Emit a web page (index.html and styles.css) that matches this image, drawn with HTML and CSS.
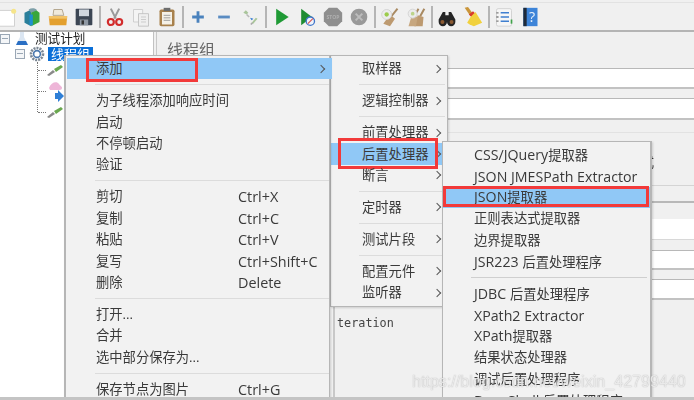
FILE: index.html
```html
<!DOCTYPE html>
<html lang="zh-CN">
<head>
    <meta charset="UTF-8">
    <title>线程组</title>
    <link rel="stylesheet" href="styles.css">
</head>
<body>

<div class="window">
    <div class="toolbar">
        <svg class="tool tool-first" viewBox="0 0 24 24"><rect x="-8" y="4" width="29" height="19" fill="#fff" stroke="#c9c9c9"/><circle cx="20" cy="5" r="3" fill="#f6e58a"/></svg>
        <svg class="tool" viewBox="0 0 24 24"><path d="M3 7 11 3v20l-8-4z" fill="#2b7f9a"/><path d="M11 5l5-2 5 4v11l-10 5z" fill="#3aa63c"/><path d="M8 3c3-2 8-2 10 1l-7 3z" fill="#7d9fa8"/><rect x="9" y="9" width="4" height="13" fill="#1f8fd0"/></svg>
        <svg class="tool" viewBox="0 0 24 24"><path d="M7 3h10l2 7H6z" fill="#efe9dc" stroke="#a99a80"/><path d="M1 11h22l-1 11H2z" fill="#e3a02f"/><path d="M1 11h22v3H1z" fill="#f3c468"/></svg>
        <svg class="tool" viewBox="0 0 24 24"><rect x="2" y="2" width="20" height="20" rx="1" fill="#3c4654"/><rect x="6" y="3" width="12" height="8" fill="#cfd6de"/><rect x="7" y="15" width="10" height="7" fill="#8f98a3"/><rect x="9" y="16" width="3" height="5" fill="#333"/></svg>
        <i class="tool-sep"></i>
        <svg class="tool" viewBox="0 0 24 24"><path d="M7 2l6 12M17 2l-6 12" stroke="#9a9a9a" stroke-width="2.4" fill="none"/><circle cx="7" cy="18" r="3.6" fill="none" stroke="#d22c2c" stroke-width="2.6"/><circle cx="17" cy="18" r="3.6" fill="none" stroke="#d22c2c" stroke-width="2.6"/></svg>
        <svg class="tool" viewBox="0 0 24 24"><path d="M3 3h11v15H3z" fill="#f4f4f4" stroke="#c9c9c9"/><path d="M9 8h12v15H9z" fill="#efefef" stroke="#bdbdbd"/><path d="M12 12h6M12 15h6M12 18h6" stroke="#c4c4c4"/></svg>
        <svg class="tool" viewBox="0 0 24 24"><rect x="3" y="3" width="18" height="20" rx="2" fill="#a8814c"/><rect x="6" y="6" width="12" height="15" fill="#f5f1e7"/><rect x="8" y="1" width="8" height="4" fill="#6d6d6d"/><path d="M8 10h8M8 13h8M8 16h8" stroke="#8f8f8f"/></svg>
        <i class="tool-sep"></i>
        <svg class="tool" viewBox="0 0 24 24"><path d="M12 5v14M5 12h14" stroke="#4a82bd" stroke-width="3.4"/></svg>
        <svg class="tool" viewBox="0 0 24 24"><path d="M5 12h14" stroke="#5a8cc2" stroke-width="3.4"/></svg>
        <svg class="tool" viewBox="0 0 24 24"><path d="M4 7l3-3 3 3-2 2z" fill="#a9c59a"/><path d="M8 9l3 3" stroke="#b9b9b9" stroke-width="2"/><path d="M12 13l4 1-2 2z" fill="#2a74d0"/><path d="M16 20l5-6-2-1-5 6z" fill="#a9c59a"/><path d="M13 21l2-2" stroke="#aaa" stroke-width="2"/></svg>
        <i class="tool-sep"></i>
        <svg class="tool tool-play" viewBox="0 0 24 24"><path d="M5 2l15 10L5 22z" fill="#1f9a35"/></svg>
        <svg class="tool" viewBox="0 0 24 24"><path d="M5 2l13 10L5 22z" fill="#1e8c32"/><circle cx="16" cy="17" r="5" fill="#eef3fb" stroke="#3f74c9" stroke-width="1.6"/><path d="M13 20l6-6" stroke="#d9534f" stroke-width="1.4"/></svg>
        <svg class="tool" viewBox="0 0 24 24"><path d="M7 1h10l6 6v10l-6 6H7l-6-6V7z" fill="#8e8e8e"/><text x="12" y="14.5" class="stop-text">STOP</text></svg>
        <svg class="tool" viewBox="0 0 24 24"><circle cx="12" cy="12" r="10" fill="#999"/><path d="M8 8l8 8M16 8l-8 8" stroke="#bdbdbd" stroke-width="2.4"/></svg>
        <i class="tool-sep"></i>
        <svg class="tool" viewBox="0 0 24 24"><path d="M21 2l-8 10" stroke="#a98a62" stroke-width="2.4"/><path d="M12 9l6 5-6 9-8-3z" fill="#bd9a70"/><circle cx="8" cy="9" r="6" fill="#ececec" stroke="#cfcfcf"/><circle cx="8" cy="9" r="2.6" fill="#9ccc4c"/></svg>
        <svg class="tool" viewBox="0 0 24 24"><path d="M22 2l-5 9M15 2l-5 9" stroke="#a98a62" stroke-width="2.4"/><path d="M14 10l7 2-1 11H10z" fill="#bd9a70"/><path d="M7 10l7 2-2 11H3z" fill="#c7a77f"/><circle cx="8" cy="8" r="5.4" fill="#ececec" stroke="#cfcfcf"/><circle cx="8" cy="8" r="2.2" fill="#bcd48a"/></svg>
        <i class="tool-sep"></i>
        <svg class="tool" viewBox="0 0 24 24"><path d="M7 6h3v4h4V6h3l5 9v3a5 5 0 0 1-10 0v-3h-0a0 0 0 0 0 0 0v3a5 5 0 0 1-10 0v-3z" fill="#252525"/><circle cx="6.500" cy="18" r="2.400" fill="#8b5a32"/><circle cx="17.500" cy="18" r="2.400" fill="#8b5a32"/></svg>
        <svg class="tool" viewBox="0 0 24 24"><path d="M2 1l4-1 6 8-3 3z" fill="#c9953a"/><path d="M7 9l5-4 3 3-4 5z" fill="#d93a2b"/><path d="M9 12l6-6 8 13-10 4-5-2-3-2z" fill="#f1d13d"/></svg>
        <i class="tool-sep"></i>
        <svg class="tool" viewBox="0 0 24 24"><rect x="3" y="2" width="18" height="21" rx="2" fill="#f6f6f6" stroke="#cdcdcd"/><path d="M8 7h10M8 12h10M8 17h10" stroke="#3f7fd0" stroke-width="1.8"/><path d="M3 7h3M3 12h3M3 17h3" stroke="#555" stroke-width="1.6" stroke-dasharray="1.500 1"/><rect x="20" y="15" width="2" height="5" fill="#3fa24a"/></svg>
        <svg class="tool" viewBox="0 0 24 24"><rect x="4" y="1" width="17" height="22" fill="#3d84d8"/><rect x="4" y="1" width="4" height="22" fill="#1f2a38"/><text x="14.500" y="18" class="help-text">?</text></svg>
    </div>

    <div class="workspace">
        <div class="tree">
            <div class="tree-row tree-row-root">
                <i class="expander"></i>
                <svg class="tree-icon" viewBox="0 0 16 16"><path d="M6 1h4v5l4 8H2l4-8z" fill="#dbe6f2"/><path d="M4 10h8l2 4H2z" fill="#2a6fc4"/></svg>
                <span class="tree-label">测试计划</span>
            </div>
            <div class="tree-row tree-row-group">
                <i class="expander"></i>
                <svg class="tree-icon" viewBox="0 0 16 16"><circle cx="8" cy="8" r="6" fill="none" stroke="#7b8794" stroke-width="2.600" stroke-dasharray="2 1"/><circle cx="8" cy="8" r="3.400" fill="#fff" stroke="#4c79ae" stroke-width="1.600"/></svg>
                <span class="tree-label tree-label-selected">线程组</span>
            </div>
            <div class="tree-children">
                <div class="child-row">
                    <i class="stub"></i>
                    <svg class="child-icon" viewBox="0 0 18 12"><path d="M1 11l6-5 2 2-6 4z" fill="#8a8a8a"/><path d="M8 5l7-4 2 2-7 5z" fill="#6aa84f"/></svg>
                </div>
                <div class="child-row child-row-tall">
                    <i class="stub"></i>
                    <svg class="child-icon child-icon-tall" viewBox="0 0 18 22"><path d="M3 8c2-6 8-7 10-4 2 3 3 2 3 4s-2 2-5 2H4z" fill="#eeb6d8"/><path d="M12 10l6 6-6 6v-3H9v-6h3z" fill="#2f7fd6"/></svg>
                </div>
                <div class="child-row">
                    <i class="stub"></i>
                    <svg class="child-icon" viewBox="0 0 18 12"><path d="M1 11l6-5 2 2-6 4z" fill="#8a8a8a"/><path d="M8 5l7-4 2 2-7 5z" fill="#6aa84f"/></svg>
                </div>
            </div>
        </div>

        <div class="content">
            <div class="content-title">线程组</div>
            <div class="field field-name"></div>
            <div class="field field-comment"></div>
            <div class="group">
                <div class="group-note">式</div>
            </div>
            <div class="field field-threads"></div>
            <div class="field field-rampup"></div>
            <div class="field field-loops"></div>
            <div class="iterations">teration</div>
        </div>
    </div>
</div>

<div class="menu menu-main">
    <div class="item item-active mark-add"><span>添加</span><b class="arrow"></b></div>
    <hr class="menu-sep">
    <div class="item"><span>为子线程添加响应时间</span></div>
    <div class="item"><span>启动</span></div>
    <div class="item"><span>不停顿启动</span></div>
    <div class="item"><span>验证</span></div>
    <hr class="menu-sep">
    <div class="item"><span>剪切</span><em>Ctrl+X</em></div>
    <div class="item"><span>复制</span><em>Ctrl+C</em></div>
    <div class="item"><span>粘贴</span><em>Ctrl+V</em></div>
    <div class="item"><span>复写</span><em>Ctrl+Shift+C</em></div>
    <div class="item"><span>删除</span><em>Delete</em></div>
    <hr class="menu-sep">
    <div class="item"><span>打开...</span></div>
    <div class="item"><span>合并</span></div>
    <div class="item"><span>选中部分保存为...</span></div>
    <hr class="menu-sep">
    <div class="item"><span>保存节点为图片</span><em>Ctrl+G</em></div>
</div>

<div class="menu menu-add">
    <div class="item"><span>取样器</span><b class="arrow"></b></div>
    <hr class="menu-sep">
    <div class="item"><span>逻辑控制器</span><b class="arrow"></b></div>
    <hr class="menu-sep">
    <div class="item"><span>前置处理器</span><b class="arrow"></b></div>
    <div class="item item-active mark-post"><span>后置处理器</span><b class="arrow"></b></div>
    <div class="item"><span>断言</span><b class="arrow"></b></div>
    <hr class="menu-sep">
    <div class="item"><span>定时器</span><b class="arrow"></b></div>
    <hr class="menu-sep">
    <div class="item"><span>测试片段</span><b class="arrow"></b></div>
    <hr class="menu-sep">
    <div class="item"><span>配置元件</span><b class="arrow"></b></div>
    <div class="item"><span>监听器</span><b class="arrow"></b></div>
</div>

<div class="menu menu-post">
    <div class="item"><span><i class="en">CSS/JQuery</i>提取器</span></div>
    <div class="item"><span class="en">JSON JMESPath Extractor</span></div>
    <div class="item item-active mark-json"><span><i class="en">JSON</i>提取器</span></div>
    <div class="item"><span>正则表达式提取器</span></div>
    <div class="item"><span>边界提取器</span></div>
    <div class="item"><span><i class="en">JSR223 </i>后置处理程序</span></div>
    <hr class="menu-sep">
    <div class="item"><span><i class="en">JDBC </i>后置处理程序</span></div>
    <div class="item"><span class="en">XPath2 Extractor</span></div>
    <div class="item"><span><i class="en">XPath</i>提取器</span></div>
    <div class="item"><span>结果状态处理器</span></div>
    <div class="item"><span>调试后置处理程序</span></div>
    <div class="item"><span><i class="en">BeanShell </i>后置处理程序</span></div>
</div>

<div class="watermark">https://blog.csdn.net/weixin_42799440</div>
<div class="bottom-edge"></div>

</body>
</html>
```

FILE: styles.css
```css
html, body {
    margin: 0;
    height: 400px;
    overflow: hidden;
}

body {
    position: relative;
    background-color: #f0f0f0;
    color: #3a3a3a;
    font-family: "Open Sans", "Noto Sans CJK SC", sans-serif;
    font-size: 13.3px;
    filter: blur(0.45px);
}

.window {
    display: flex;
    flex-direction: column;
    height: 400px;
}

/* toolbar */
.toolbar {
    display: flex;
    align-items: center;
    height: 27px;
    margin-top: 2px;
    border-top: 1px solid #e2e2e2;
    border-bottom: 2px solid #b4b4b4;
    overflow: hidden;
}

.tool {
    flex: none;
    width: 20px;
    height: 20px;
    margin: 0 3px;
}

.tool-first {
    margin-left: -3px;
    margin-right: 2px;
}

.tool-play {
    margin-left: 4px;
    margin-right: 2px;
}

.tool-sep {
    flex: none;
    width: 2px;
    height: 22px;
    margin: 0 1.5px;
    background-color: #b5b5b5;
}

.stop-text {
    font-size: 6px;
    fill: #b0b0b0;
    font-weight: 700;
    text-anchor: middle;
}

.help-text {
    font-size: 17px;
    fill: #e8f1fb;
    text-anchor: middle;
}

/* tree + right panel */
.workspace {
    display: flex;
    flex: 1;
    gap: 2px;
    min-height: 0;
}

.tree {
    width: 153px;
    background-color: #fff;
    border-right: 1px solid #c2c2c2;
}

.tree-row {
    display: flex;
    align-items: center;
    gap: 3px;
    color: #222;
}

.tree-row-root {
    height: 13px;
    gap: 4px;
}

.tree-row-root .tree-label {
    margin-left: 1px;
}

.tree-row-group {
    height: 17px;
    padding-left: 15px;
}

.expander {
    flex: none;
    width: 8px;
    height: 8px;
    border: 1px solid #9aa7b5;
    background: linear-gradient(#9aa7b5, #9aa7b5) center / 6px 1px no-repeat #f4f6f8;
}

.tree-icon {
    flex: none;
    width: 16px;
    height: 16px;
}

.tree-row-group .tree-icon {
    margin-left: 1px;
}

.tree-label {
    font-size: 12.6px;
    line-height: 14px;
}

.tree-label-selected {
    padding: 0 3px;
    font-size: 13px;
    background-color: #0a6fd8;
    color: #fff;
}

.tree-children {
    display: flex;
    flex-direction: column;
    box-sizing: border-box;
    width: 30px;
    height: 50px;
    margin: 0 0 0 37px;
    border-left: 1px dotted #777;
}

.child-row {
    flex: none;
    display: flex;
    align-items: center;
    height: 16px;
}

.child-row-tall {
    height: 26px;
}

.stub {
    flex: none;
    width: 8px;
    border-top: 1px dotted #777;
}

.child-icon {
    flex: none;
    width: 18px;
    height: 12px;
}

.child-icon-tall {
    height: 22px;
}

.content {
    flex: 1;
    display: flex;
    flex-direction: column;
    border-left: 1px solid #c8c8c8;
    min-width: 0;
}

.content-title {
    height: 36px;
    padding: 7px 0 0 10px;
    box-sizing: border-box;
    color: #666;
    font-size: 16px;
    line-height: 22px;
}

.field {
    margin-left: 100px;
    background-color: #fff;
    border-top: 1px solid #b8b8b8;
    border-bottom: 2px solid #c2c2c2;
}

.field-name {
    height: 18px;
}

.field-comment {
    height: 19px;
    margin-top: 9px;
}

.group {
    height: 52px;
    margin-top: 12px;
    border-top: 1px solid #e2e2e2;
    border-bottom: 1px solid #d4d4d4;
    text-align: right;
}

.group-note {
    margin: 19px 40px 0 0;
    line-height: 20px;
    color: #333;
}

.field-threads {
    height: 36px;
    margin-top: 15px;
    border-top-width: 2px;
    background: linear-gradient(#f0f0f0 16px, #fff 16px);
    border-bottom-width: 1px;
    border-bottom-color: #d8d8d8;
}

.field-rampup {
    height: 17px;
    margin-top: 10px;
}

.field-loops {
    height: 18px;
    margin-top: 9px;
}

.iterations {
    flex: 1;
    margin: 6px 0 0 176px;
    padding: 9px 0 0 2px;
    border-left: 2px solid #c8c8c8;
    font-family: "DejaVu Sans Mono", monospace;
    font-size: 11.8px;
    line-height: 16px;
    color: #444;
}

/* popup menus */
.menu {
    position: absolute;
    box-sizing: border-box;
    background-color: #f2f2f2;
    border: 1px solid #b6b6b6;
    padding-top: 2px;
    box-shadow: 1px 1px 2px rgba(0, 0, 0, 0.15);
}

.menu-main {
    left: 64px;
    top: 55px;
    width: 266px;
    height: 345px;
    border-left-width: 2px;
    padding-left: 1px;
    z-index: 2;
}

.menu-add {
    left: 330px;
    top: 55px;
    width: 118px;
    height: 252px;
    z-index: 1;
}

.menu-post {
    left: 442px;
    top: 141px;
    width: 210px;
    height: 262px;
    border-right-width: 2px;
    padding-top: 2px;
    z-index: 3;
}

.item {
    position: relative;
    display: flex;
    align-items: center;
    justify-content: space-between;
    height: 21.4px;
    line-height: 21px;
    white-space: nowrap;
}

.menu-main .item {
    padding: 0 0 0 29px;
}

.menu-main .item span {
    flex: none;
    width: 142px;
}

.menu-main .item em {
    flex: 1;
    font-size: 14.4px;
    font-style: normal;
}

.menu-main .item-active {
    margin-right: -3px;
    padding-right: 6px;
}

.menu-add .item {
    padding: 0 5px 0 31px;
}

.menu-post .item {
    padding-left: 31px;
}

.en {
    font-size: 14.2px;
    font-style: normal;
}

.item-active {
    background-color: #90c8f6;
}

.arrow {
    flex: none;
    width: 5px;
    height: 5px;
    margin-right: 2px;
    border-top: 1px solid #555;
    border-right: 1px solid #555;
    transform: rotate(45deg);
}

.menu-sep {
    height: 1px;
    margin: 4.8px 0 4.8px 28px;
    border: 0;
    background-color: #dcdcdc;
}

.menu-add .menu-sep {
    margin-right: 2px;
}

.menu-post .menu-sep {
    margin: 4.8px 3px 4.8px 28px;
    background-color: #cfcfcf;
}

/* red annotation boxes */
.mark-add::after,
.mark-post::after,
.mark-json::after {
    content: "";
    position: absolute;
    border: 3px solid #f23a3a;
    box-sizing: border-box;
}

.mark-add::after {
    left: 19px;
    top: 0;
    width: 112px;
    height: 24px;
}

.mark-post::after {
    left: 7px;
    top: -5px;
    width: 100px;
    height: 31px;
}

.mark-json::after {
    left: 0;
    top: -1px;
    width: 206px;
    height: 21px;
}

.watermark {
    position: absolute;
    left: 412px;
    top: 372px;
    z-index: 4;
    font-family: "Liberation Sans", sans-serif;
    font-size: 16.1px;
    line-height: 18px;
    color: rgba(255, 255, 255, 0.75);
    text-shadow: 0 0 1px rgba(120, 120, 120, 0.7);
}

.bottom-edge {
    position: absolute;
    left: 0;
    right: 0;
    bottom: 0;
    height: 3px;
    z-index: 5;
    background-color: #c4c4c4;
}
```
